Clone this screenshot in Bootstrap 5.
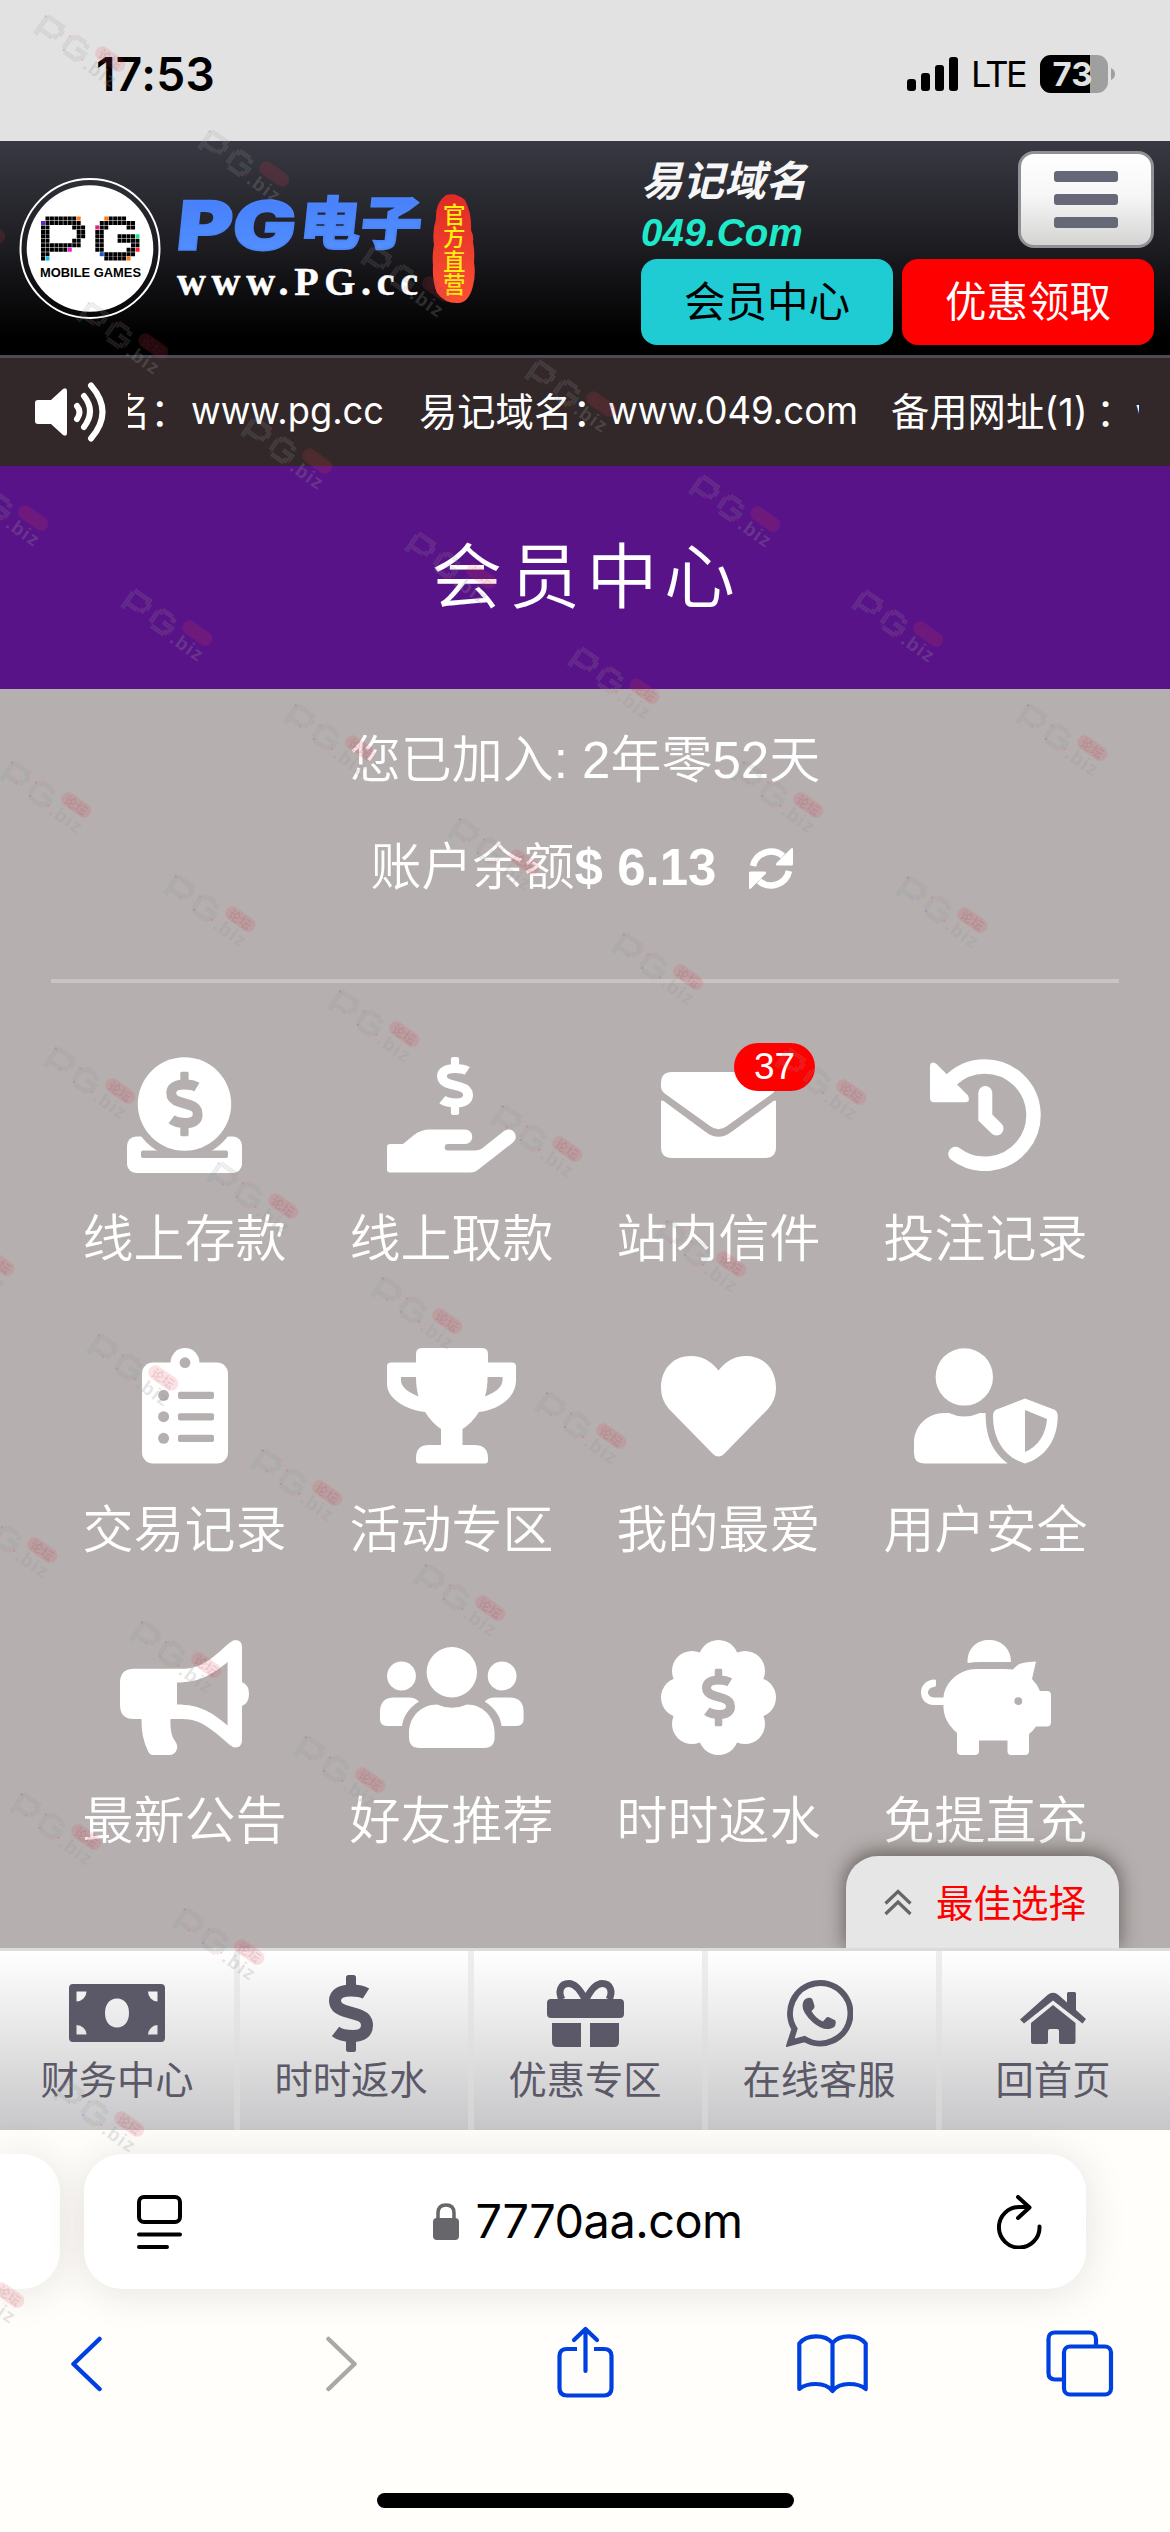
<!DOCTYPE html>
<html lang="zh-CN">
<head>
<meta charset="utf-8">
<meta name="viewport" content="width=device-width, initial-scale=1">
<title>会员中心</title>
<link href="https://cdn.jsdelivr.net/npm/bootstrap@5.3.0/dist/css/bootstrap.min.css" rel="stylesheet">
<style>
  body { width: 1170px; height: 2532px; overflow: hidden; background: #fffefb; font-family: "Liberation Sans", "Noto Sans CJK SC", sans-serif; line-height: 1; }
  a { text-decoration: none; color: inherit; }
  svg { display: block; flex: none; }
  .ui-font { font-family: Inter, "Noto Sans CJK SC", sans-serif; }

  .status { height: 141px; background: #e2e2e2; color: #000; padding: 7px 54px 0 96px; }
  .clock { font-size: 46px; font-weight: 600; letter-spacing: .4px; }
  .lte { font-size: 36px; letter-spacing: -2.6px; }

  .site-head { height: 217px; background: linear-gradient(#393943, #1c1c21 50%, #000 92%); border-bottom: 3px solid #4c4b55; padding: 10px 16px 0 16px; }
  .head-right { width: 513px; }
  .domain-cn { font-size: 41.5px; font-weight: 600; font-style: italic; color: #f6f6f6; height: 63px; padding-top: 10px; }
  .domain-en { font-size: 38.5px; font-weight: 700; font-style: italic; color: #1ee9cb; letter-spacing: .2px; }
  .menu-btn { width: 136px; height: 97px; border: 3px solid #909096; border-radius: 16px; background: linear-gradient(#fff, #f7f7f7 45%, #d4d4d3); padding: 0; }
  .menu-btn i { width: 64px; height: 11px; border-radius: 3px; background: #666878; }
  .head-btn { width: 252px; height: 86px; border: 0; border-radius: 16px; font-size: 41.5px; padding: 2px 0 0; line-height: 84px; }

  .ticker { height: 108px; background: #322829; color: #fff; padding: 0 31px 0 34px; }
  .ticker-text { width: 1011px; margin-left: 19px; font-size: 38.3px; height: 60px; }
  .ticker-text > span { flex: none; }

  .page-title { height: 223px; background: #591388; color: #fff; font-size: 71px; letter-spacing: 6.6px; font-weight: 350; padding-left: 3px; }

  .panel { height: 1259px; background: #b5afaf; color: #fff; }
  .joined { font-size: 51px; height: 106px; padding-top: 34px; }
  .joined, .balance { line-height: 1.5; font-weight: 350; }
  .balance { height: 146px; font-size: 51px; margin-bottom: 38px; padding-right: 6px; }
  .rule { height: 4px; margin: 0 51px; background: #c8c4c4; }
  .tiles { padding: 74px 51px 0; }
  .tile { height: 291px; }
  .tile .pic { height: 116px; }
  .tile .cap-text { font-size: 51px; line-height: 76px; margin-top: 29px; font-weight: 350; white-space: nowrap; }
  .mail-count { left: 149px; top: -14px; width: 81px; height: 48px; border-radius: 24px; background: #f00; font-size: 37px; line-height: 48px; }

  .best-pick { right: 51px; top: 1856px; width: 273px; height: 92px; background: #e6e6e6; border-radius: 32px 32px 0 0; color: #f00; font-size: 37.5px; box-shadow: 0 -3px 18px 2px rgba(70,65,60,.65); clip-path: inset(-40px -40px 0 -40px); padding-left: 38px; gap: 24px; }
  .best-pick span { padding-top: 5px; }

  .dock { height: 182px; border-top: 3px solid #dcdcdd; background: linear-gradient(#fff, #e4e4e5 50%, #c7c7c9); color: #5b5967; }
  .dock a { width: 234px; height: 179px; }
  .dock a + a { background: linear-gradient(#eeeeee, #d3d3d4) left / 6px 100% no-repeat; }
  .dock .glyph { height: 107px; }
  .dock .word { font-size: 38.3px; line-height: 46px; }

  .browser { height: 402px; background: #fffefb; }
  .url-row { padding-top: 24px; gap: 24px; height: 159px; }
  .prev-tab { width: 60px; height: 135px; background: #fff; border-radius: 0 38px 38px 0; box-shadow: 0 3px 40px rgba(60,40,30,.13); }
  .url-box { width: 1002px; height: 135px; background: #fff; border-radius: 38px; box-shadow: 0 3px 40px rgba(60,40,30,.13); padding: 0 44px 0 53px; color: #000; }
  .url-text { font-size: 46.8px; letter-spacing: -.5px; }
  .tools { padding: 36px 56px 0 71px; height: 204px; }
  .home-bar { width: 417px; height: 15px; border-radius: 8px; background: #000; }
  .stamps { left: 0; top: 0; pointer-events: none; z-index: 5; }
</style>
</head>
<body class="position-relative m-0">

<svg width="0" height="0" class="position-absolute" aria-hidden="true">
  <defs>
    <symbol id="dollar" viewBox="0 0 44 77" preserveAspectRatio="none">
      <rect x="17" y="0" width="10" height="16" rx="2.5" fill="currentColor"/><rect x="17" y="61" width="10" height="16" rx="2.5" fill="currentColor"/>
      <path d="M37 18.5C33 16 27 15.4 22 15.4C12 15.4 6 19 6 25.5C6 32 11 34.5 16 36L28 39.5C34 41.3 38 44 38 50.5C38 58 32 61 24 61C17 61 11 60 6.5 56.5" fill="none" stroke="currentColor" stroke-width="12" stroke-linejoin="round"/>
    </symbol>
    <g id="pg-cells" fill="none" stroke-width="4" stroke-dasharray="4 .46">
      <path stroke="currentColor" d="M4.46 2h31.2M4.46 6.46h35.6M0 10.9h8.9M31.2 10.9h13.2M0 15.4h8.9M35.7 15.4h8.9M0 19.8h8.9M35.7 19.8h8.9M0 24.3h8.9M31.2 24.3h8.9M0 28.8h40M0 33.2h26.7M0 37.7h8.9M0 42.1h4M67.7 2h17.8M58.8 6.46h35.6M58.8 10.9h8.9M85.6 10.9h8.9M54.3 15.4h8.9M54.3 19.8h8.9M76.6 19.8h17.8M54.3 24.3h8.9M76.6 24.3h22.3M54.3 28.8h8.9M90 28.8h8.9M54.3 33.2h8.9M85.6 33.2h8.9M63.3 37.7h31.2M63.3 42.1h22.3"/>
      <path stroke="#ff7a18" d="M35.7 2h4M63.3 2h4M85.6 42.1h4"/><path stroke="#6a1be0" d="M0 6.46h4"/><path stroke="#e81fd0" d="M26.8 33.2h4"/>
      <path stroke="#18bde0" d="M4.46 42.1h4"/><path stroke="#e0207c" d="M54.3 10.9h4"/><path stroke="#27e08a" d="M94.5 19.8h4"/>
      <path stroke="#ff2030" d="M94.5 33.2h4"/><path stroke="#1d55c8" d="M58.8 37.7h4"/>
    </g>
    <g id="stamp" transform="translate(-4 -1) rotate(35) scale(.96)">
      <use href="#pg-cells" transform="scale(.6 .57)" color="#999" opacity=".2"/>
      <rect x="64" y="-6" width="35" height="15" rx="7.5" fill="#e63c50" fill-opacity=".15"/>
      <text x="68.500" y="7" font-size="13" font-weight="700" fill="#803040" fill-opacity=".14" font-family="Noto Sans CJK SC">论坛</text>
      <text x="62" y="26" font-size="20" font-weight="700" fill="#999" fill-opacity=".25" textLength="37">.biz</text>
    </g>
    <linearGradient id="blue" x2="0" y2="1"><stop stop-color="#447bf9"/><stop offset="1" stop-color="#5593ff"/></linearGradient>
    <linearGradient id="seal" x2="0" y2="1"><stop stop-color="#e02a26"/><stop offset="1" stop-color="#fb5033"/></linearGradient>
  </defs>
</svg>

<div class="status ui-font d-flex align-items-center">
  <div class="clock">17:53</div>
  <div class="d-flex align-items-center ms-auto">
    <svg width="52" height="36" viewBox="0 0 52 36" style="margin-right:12px"><rect y="23" width="9" height="12" rx="3"/><rect x="14" y="17" width="9" height="18" rx="3"/><rect x="28" y="9" width="9" height="26" rx="3"/><rect x="42" y="1" width="9" height="34" rx="3"/></svg>
    <div class="lte">LTE</div>
    <svg width="76" height="38" viewBox="0 0 76 38" style="margin-left:15px"><clipPath id="bc"><rect width="68" height="38" rx="11"/></clipPath><g clip-path="url(#bc)"><rect width="68" height="38" fill="#9f9f9f"/><rect width="50" height="38"/></g><path d="M71 13q4 2 4 6t-4 6z" fill="#9f9f9f"/><text x="12.500" y="31" font-size="33" font-weight="700" fill="#e2e2e2" textLength="40">73</text></svg>
  </div>
</div>

<header class="site-head d-flex justify-content-between">
  <svg width="470" height="190" viewBox="16 151 470 190">
    <circle cx="90" cy="248.500" r="69.500" fill="none" stroke="#fff" stroke-width="2"/><circle cx="90" cy="248.500" r="63.300" fill="#fff"/>
    <use href="#pg-cells" x="41" y="216.500" color="#000"/>
    <text x="40" y="277" font-size="12.800" font-weight="700" textLength="101" lengthAdjust="spacingAndGlyphs">MOBILE GAMES</text>
    <g fill="url(#blue)">
      <text transform="translate(175 250) skewX(-6)" font-family="Inter" font-size="68" font-weight="900" stroke="#4b85fc" stroke-width="1.500" textLength="119" lengthAdjust="spacingAndGlyphs">PG</text>
      <text transform="translate(298 244) skewX(-6)" font-family="Noto Sans CJK SC" font-size="57" font-weight="900" stroke="#4b85fc" stroke-width="2" textLength="122" lengthAdjust="spacingAndGlyphs">电子</text>
    </g>
    <text x="177" y="295" font-family="Liberation Serif" font-size="40" font-weight="700" fill="#fff" stroke="#fff" stroke-width=".5" textLength="241">www.PG.cc</text>
    <path d="M446 195q10-3 19 5q7 14 6 30q3 6 2 12q2 10 1 20q2 12-1 24q-4 16-14 17q-14 1-22-10q-5-12-4-28q-1-10 1-20q-2-14 2-26q-1-16 10-24z" fill="url(#seal)"/>
    <g font-family="Noto Sans CJK SC" font-size="22.500" font-weight="500" fill="#ffee10"><text x="443" y="223">官</text><text x="443" y="246">方</text><text x="443" y="269.500">直</text><text x="443" y="292.500">营</text></g>
  </svg>
  <div class="head-right">
    <div class="d-flex justify-content-between" style="height:108px">
      <div><div class="domain-cn">易记域名</div><div class="domain-en">049.Com</div></div>
      <button class="menu-btn d-flex flex-column align-items-center justify-content-center" style="gap:12px"><i></i><i></i><i></i></button>
    </div>
    <div class="d-flex justify-content-between">
      <button class="head-btn" style="background:#1fccd4;color:#000">会员中心</button>
      <button class="head-btn" style="background:#f00;color:#fff">优惠领取</button>
    </div>
  </div>
</header>

<div class="ticker d-flex align-items-center">
  <svg width="75" height="62" viewBox="0 0 75 62"><path d="M4 19H17L29 8Q33 6 33 10V52Q33 56 29 54L17 43H4Q1 43 1 40V22Q1 19 4 19Z" fill="#fff"/><path d="M43 25Q48 31 43 38M50 15Q62 30 50 46M57 4.500Q80 31 57 57.500" fill="none" stroke="#fff" stroke-width="6" stroke-linecap="round"/></svg>
  <div class="ticker-text ui-font overflow-hidden d-flex align-items-center text-nowrap">
    <span style="margin-left:-16px;width:79px">名：</span><span style="width:228px"><svg width="193" height="60"><text x="0" y="42" fill="#fff" textLength="193" lengthAdjust="spacingAndGlyphs">www.pg.cc</text></svg></span><span style="width:189px">易记域名：</span><span style="width:283px"><svg width="250" height="60"><text x="0" y="42" fill="#fff" textLength="250" lengthAdjust="spacingAndGlyphs">www.049.com</text></svg></span><span style="width:199px">备用网址(1)</span><span style="margin-left:6px">：</span><span style="margin-left:1px">www.pg.cc</span>
  </div>
</div>

<h1 class="page-title m-0 d-flex align-items-center justify-content-center">会员中心</h1>

<main class="panel">
  <div class="joined text-center">您已加入: 2年零52天</div>
  <div class="balance d-flex align-items-center justify-content-center">
    <span>账户余额</span><b>$ 6.13</b>
    <svg width="44" height="43" viewBox="0 0 44 43" style="margin-left:33px"><g id="half"><path d="M4 19A18.500 18.500 0 0 1 34 9" fill="none" stroke="#fff" stroke-width="6.500"/><path d="M44 2V17Q44 18.500 42.500 18.500H28Q26 18 27.500 16L41.500 2Q43.500 0 44 2Z" fill="#fff"/></g><use href="#half" transform="rotate(180 22 21.500)"/></svg>
  </div>
  <div class="rule"></div>
  <div class="tiles row row-cols-4 g-0 text-center">
    <div class="tile col"><div class="pic d-flex justify-content-center align-items-center">
      <svg width="115" height="116" fill="#fff"><rect y="79.500" width="115" height="36.500" rx="9"/><circle cx="57.500" cy="47" r="54" fill="#b5afaf"/><rect x="14" y="93.500" width="87" height="7.500" rx="2" fill="#b5afaf"/><circle cx="57.500" cy="47" r="46.700"/><use href="#dollar" x="39.200" y="14.500" width="36.500" height="65" color="#b5afaf"/></svg></div>
      <div class="cap-text">线上存款</div></div>
    <div class="tile col"><div class="pic d-flex justify-content-center align-items-center">
      <svg width="129" height="116" fill="#fff"><use href="#dollar" x="50" y="0" width="36" height="58"/><path d="M3 87H16L27 78Q34 72.500 43 72.500H78a7.200 7.200 0 0 1 0 14.500H61a3.300 3.300 0 0 0 0 6.600H88q4 0 7-2L117 74a7.300 7.300 0 0 1 9 11.500L92 112Q88 115.500 83 115.500H3a3 3 0 0 1-3-3V90a3 3 0 0 1 3-3z"/></svg></div>
      <div class="cap-text">线上取款</div></div>
    <div class="tile col position-relative"><div class="pic d-flex justify-content-center align-items-center">
      <svg width="115" height="86" fill="#fff"><path d="M11 0H104Q115 0 115 11V15Q115 18.500 112 21L66 54Q57.500 60.500 49 54L3 21Q0 18.500 0 15V11Q0 0 11 0Z"/><path d="M0 29Q1.500 27.500 4 30L44 59.500Q57.500 70 71 59.500L111 30Q113.500 27.500 115 29V75Q115 86 104 86H11Q0 86 0 75Z"/></svg></div>
      <span class="mail-count position-absolute text-white">37</span>
      <div class="cap-text">站内信件</div></div>
    <div class="tile col"><div class="pic d-flex justify-content-center align-items-center">
      <svg width="111" height="112" fill="#fff"><g fill="none" stroke="#fff" stroke-width="14.500" stroke-linecap="round"><path d="M25.500 95A48.700 48.700 0 1 0 21 21"/><path d="M55.300 34V58.500L66.500 69.500" stroke-width="14"/></g><path d="M0 7.500Q0 3.500 3 3.500Q5 3.500 7 5.500L38 36.500Q41 43.300 35 43.300H4Q0 43.300 0 39Z"/></svg></div>
      <div class="cap-text">投注记录</div></div>

    <div class="tile col"><div class="pic d-flex justify-content-center align-items-center">
      <svg width="86" height="116" fill="#fff"><rect y="14.500" width="86" height="101" rx="11"/><circle cx="43" cy="14.400" r="14.400"/><g fill="#b5afaf"><circle cx="43" cy="14.700" r="5.400"/><circle cx="21.600" cy="47.300" r="5.500"/><circle cx="21.600" cy="68.700" r="5.500"/><circle cx="21.600" cy="90.300" r="5.500"/><rect x="36" y="43.800" width="36" height="7.200" rx="2"/><rect x="36" y="65.200" width="36" height="7.200" rx="2"/><rect x="36" y="86.700" width="36" height="7.200" rx="2"/></g></svg></div>
      <div class="cap-text">交易记录</div></div>
    <div class="tile col"><div class="pic d-flex justify-content-center align-items-center">
      <svg width="129" height="116" fill="#fff"><path fill-rule="evenodd" d="M35 0H95Q101 0 101 6V14.500H125Q129 14.500 129 18.500V32C129 52 108 62.500 92 64Q85 75 75.500 81V97H87Q101 97 101 110V112.500Q101 115.500 98 115.500H32Q29 115.500 29 112.500V110Q29 97 42 97H54V81Q45 75 38 64C22 62.500 0 52 0 36V18.500Q0 14.500 4 14.500H29V6Q29 0 35 0ZM14 29V33Q15 42 31.500 48.500Q29 40 29 29ZM115.500 29V33Q114.500 42 98 48.500Q100.600 40 100.600 29Z"/></svg></div>
      <div class="cap-text">活动专区</div></div>
    <div class="tile col"><div class="pic d-flex justify-content-center align-items-center">
      <svg width="115" height="101" fill="#fff"><path d="M57.500 14.500C66 4 75 0 85 0C103 0 115 13 115 32Q115 44 107 53L63 98Q57.500 103 52 98L8 53Q0 44 0 32C0 13 12 0 30 0C40 0 49 4 57.500 14.500Z"/></svg></div>
      <div class="cap-text">我的最爱</div></div>
    <div class="tile col"><div class="pic d-flex justify-content-center align-items-center">
      <svg width="144" height="116" fill="#fff"><circle cx="50.300" cy="28.900" r="28.700"/><path d="M0 95C0 78 13 65 31 65H35Q50 72 66 65H71.600C71.600 90 79 104 93.700 115.500H10Q0 115.500 0 105Z"/><path fill-rule="evenodd" d="M111 50.500L140 61.500Q143.700 63 143.700 68C143.700 93 130 110 111 115.500C92 110 79 93 79 68Q79 63 82.500 61.500ZM111 62L133 71Q131 95 111 104Z"/></svg></div>
      <div class="cap-text">用户安全</div></div>

    <div class="tile col"><div class="pic d-flex justify-content-center align-items-center">
      <svg width="129" height="115" fill="#fff"><path fill-rule="evenodd" d="M14 28.800H62C82 28.800 92 18 110 2.500Q113 0 115 0Q122 0 122 7V42Q129 45 129 54T122 66V100Q122 107.500 115 107.500Q113 107.500 110 105C92 90 82 79 62 79H50.500C50 90 52 97 55 101Q58 105 57 109Q55 115 49 115H33Q29.500 115 28 111Q21 97 21.500 79H14Q0 79 0 65V43Q0 28.800 14 28.800ZM57 42.500C80 42.500 93 34 107.600 22V85.500C93 73 80 64.500 57 64.500Z"/></svg></div>
      <div class="cap-text">最新公告</div></div>
    <div class="tile col"><div class="pic d-flex justify-content-center align-items-center">
      <svg width="144" height="101" fill="#fff"><circle cx="71.800" cy="25.200" r="25.200"/><path d="M29 86C29 70 41 57.500 57 57.500Q72 64 87 57.500C103 57.500 114.600 70 114.600 86V90Q114.600 101 104 101H39.500Q29 101 29 90Z"/><g id="side"><circle cx="21.500" cy="29" r="14.400"/><path d="M14 50.500H29Q35 50.500 39 54.500Q24 64 22 79H7Q0 79 0 72V65Q0 50.500 14 50.500Z"/></g><use href="#side" transform="translate(143.600) scale(-1 1)"/></svg></div>
      <div class="cap-text">好友推荐</div></div>
    <div class="tile col"><div class="pic d-flex justify-content-center align-items-center">
      <svg width="115" height="115" fill="#fff"><circle cx="57.500" cy="57.500" r="40"/><circle cx="57.500" cy="20" r="20"/><circle cx="57.500" cy="95" r="20"/><circle cx="20" cy="57.500" r="20"/><circle cx="95" cy="57.500" r="20"/><circle cx="31" cy="31" r="20"/><circle cx="84" cy="31" r="20"/><circle cx="31" cy="84" r="20"/><circle cx="84" cy="84" r="20"/><use href="#dollar" x="41" y="28.500" width="33" height="58" color="#b5afaf"/></svg></div>
      <div class="cap-text">时时返水</div></div>
    <div class="tile col"><div class="pic d-flex justify-content-center align-items-center">
      <svg width="130" height="115" fill="#fff"><path d="M46.600 23C46 8 56 0 68 0C80 0 90 8 90 22H60Q53 22 46.600 23Z"/><path fill-rule="evenodd" d="M56 29H84Q88 29 92 29.500C97 23 103 22 115 21.500L111 39Q116 44 119 51H126Q130 51 130 55V82Q130 86.500 126 86.500H115Q112 91 108 94V111Q108 115 104 115H90Q86.500 115 86.500 111V100.500H58V111Q58 115 54 115H40Q36 115 36 111V93C27 85 22 76 22.500 65H13C-4 65 -5 40 14 39.500Q15 39.500 15 41V45Q15 47 13 47C5 48 5 57 13 57.500H22.500C24 42 38 29 56 29ZM97.300 57.200A3.900 3.900 0 1 0 97.300 65A3.900 3.900 0 1 0 97.300 57.200Z"/></svg></div>
      <div class="cap-text">免提直充</div></div>
  </div>
</main>

<a href="#" class="best-pick position-absolute d-flex align-items-center">
  <svg width="28" height="27" viewBox="0 0 28 27" fill="none" stroke="#666" stroke-width="3.200"><path d="M1.500 14.500L14 2.500L26.500 14.500M1.500 25L14 13L26.500 25"/></svg><span>最佳选择</span>
</a>

<nav class="dock d-flex text-center">
  <a href="#"><div class="glyph d-flex justify-content-center" style="padding-top:33px"><svg width="96" height="58" viewBox="0 0 96 58"><path fill="currentColor" fill-rule="evenodd" d="M4 0H92Q96 0 96 4V54Q96 58 92 58H4Q0 58 0 54V4Q0 0 4 0ZM7.500 7.500V17.500A10 10 0 0 0 17.500 7.500ZM88.500 7.500H79A10 10 0 0 0 88.500 17.500ZM7.500 50.500H17.500A10 10 0 0 0 7.500 41ZM88.500 50.500V41A10 10 0 0 0 79 50.500ZM48 14.500C40 14.500 36 21 36 29S40 43.500 48 43.500S60 37 60 29S56 14.500 48 14.500Z"/></svg></div><div class="word">财务中心</div></a>
  <a href="#"><div class="glyph d-flex justify-content-center pt-4"><svg width="44" height="77"><use href="#dollar" width="44" height="77"/></svg></div><div class="word">时时返水</div></a>
  <a href="#"><div class="glyph d-flex justify-content-center" style="padding-top:29px"><svg width="77" height="67" viewBox="0 0 77 67"><path d="M4 19H73Q77 19 77 23V34Q77 38 73 38H4Q0 38 0 34V23Q0 19 4 19ZM5 43H34V67H10Q5 67 5 62ZM43 43H72V62Q72 67 67 67H43Z" fill="currentColor"/><path d="M38.500 20Q30 3.500 22 3.500C13 3.500 11 12 15 19.500M38.500 20Q47 3.500 55 3.500C64 3.500 66 12 62 19.500" fill="none" stroke="currentColor" stroke-width="7"/></svg></div><div class="word">优惠专区</div></a>
  <a href="#"><div class="glyph d-flex justify-content-center" style="padding-top:29px"><svg width="67" height="67" viewBox="0 0 67 67"><path d="M4 63L8.500 49A30.200 30.200 0 1 1 18.500 59Z" fill="none" stroke="currentColor" stroke-width="6"/><path d="M22 18Q26 17 27 21L28.500 26Q29 28 25.500 31Q29 38 37 41.500L40.500 37.500Q41.500 36.500 43 37.200L49.500 40.500Q51 47 45 48.500Q37 51 27 42.500Q16 32.500 16.500 25Q17 19 22 18Z" fill="currentColor"/></svg></div><div class="word">在线客服</div></a>
  <a href="#"><div class="glyph d-flex justify-content-center" style="padding-top:41px"><svg width="66" height="52" viewBox="0 0 66 52" fill="currentColor"><path d="M0 27.500L27.500 3Q33 -1.500 38.500 3L47 10.500V1.500Q47 0 48.500 0H54.500Q56 0 56 1.500V18L66 27L62.500 31.500L33 8.500L4 31.500Z"/><path d="M33 13L55.500 31V50Q55.500 52 53.500 52H41Q39 52 39 50V39Q39 37 37 37H30Q28 37 28 39V50Q28 52 26 52H13Q11 52 11 50V31Z"/></svg></div><div class="word">回首页</div></a>
</nav>

<footer class="browser ui-font">
  <div class="url-row d-flex">
    <div class="prev-tab"></div>
    <div class="url-box d-flex align-items-center justify-content-between">
      <svg width="45" height="54" viewBox="0 0 45 54" fill="none" stroke="#000" stroke-width="4" stroke-linecap="round"><rect x="2" y="2" width="41" height="25" rx="5"/><path d="M2 39.500H43M2 52H30"/></svg>
      <div class="d-flex align-items-center" style="gap:17px;margin-right:4px">
        <svg width="26" height="37" viewBox="0 0 26 37"><rect y="15" width="26" height="22" rx="4" fill="#67666b"/><path d="M5 17V10Q5 2 13 2T21 10V17" fill="none" stroke="#67666b" stroke-width="3.500"/></svg>
        <span class="url-text">7770aa.com</span>
      </div>
      <svg width="45" height="54" viewBox="0 0 45 54" fill="none" stroke="#000" stroke-width="4" stroke-linecap="round" stroke-linejoin="round"><path d="M42.500 31.500A20.300 20.300 0 1 1 22.500 12H32M21 2L32.500 12.500L21 23"/></svg>
    </div>
  </div>
  <div class="tools d-flex align-items-start">
    <svg width="32" height="56" style="margin-top:11px" fill="none" stroke="#0040e0" stroke-width="4.500" stroke-linecap="round" stroke-linejoin="round"><path d="M28.500 3L2.500 28L28.500 53"/></svg>
    <svg width="32" height="56" style="margin-top:11px;margin-left:223px" fill="none" stroke="#a9a9a7" stroke-width="4.500" stroke-linecap="round" stroke-linejoin="round"><path d="M2.500 3L28.500 28L2.500 53"/></svg>
    <svg width="57" height="72" style="margin-top:1px;margin-left:199px" fill="none" stroke="#0040e0" stroke-width="4.200" stroke-linecap="round" stroke-linejoin="round"><path d="M20 23H10Q2.500 23 2.500 30V62Q2.500 69.500 10 69.500H47Q54.500 69.500 54.500 62V30Q54.500 23 47 23H37" stroke-linecap="butt"/><path d="M28.500 45V3M17 14L28.500 3L40 14"/></svg>
    <svg width="71" height="60" style="margin-top:9px;margin-left:183px" fill="none" stroke="#0040e0" stroke-width="4.200" stroke-linejoin="round"><path d="M35.500 9Q30 2.300 19 2.300Q8 2.300 2.300 9.500V55Q8 50 19 50Q30 50 35.500 57Q41 50 52 50Q63 50 68.700 55V9.500Q63 2.300 52 2.300Q41 2.300 35.500 9ZV57"/></svg>
    <svg width="68" height="67" style="margin-top:5px;margin-left:178px" fill="none" stroke="#0040e0" stroke-width="4.200"><rect x="18" y="16.500" width="47" height="48" rx="6"/><path d="M50 15V9Q50 2.500 43.500 2.500H9Q2.500 2.500 2.500 9V43Q2.500 49.500 9 49.500H17"/></svg>
  </div>
  <div class="home-bar mx-auto"></div>
</footer>

<svg class="stamps position-absolute" width="1170" height="2532" aria-hidden="true">
  <use href="#stamp" x="51" y="14"/><use href="#stamp" x="215" y="129"/><use href="#stamp" x="378" y="244"/><use href="#stamp" x="542" y="359"/><use href="#stamp" x="706" y="474"/><use href="#stamp" x="869" y="589"/><use href="#stamp" x="1033" y="703"/>
  <use href="#stamp" x="-69" y="186"/><use href="#stamp" x="94" y="301"/><use href="#stamp" x="258" y="416"/><use href="#stamp" x="422" y="531"/><use href="#stamp" x="585" y="646"/><use href="#stamp" x="749" y="760"/><use href="#stamp" x="913" y="875"/>
  <use href="#stamp" x="-26" y="473"/><use href="#stamp" x="138" y="588"/><use href="#stamp" x="301" y="703"/><use href="#stamp" x="465" y="817"/><use href="#stamp" x="629" y="932"/><use href="#stamp" x="792" y="1047"/>
  <use href="#stamp" x="17" y="760"/><use href="#stamp" x="181" y="874"/><use href="#stamp" x="345" y="989"/><use href="#stamp" x="508" y="1104"/><use href="#stamp" x="672" y="1219"/>
  <use href="#stamp" x="61" y="1046"/><use href="#stamp" x="224" y="1161"/><use href="#stamp" x="388" y="1276"/><use href="#stamp" x="552" y="1391"/>
  <use href="#stamp" x="-60" y="1218"/><use href="#stamp" x="104" y="1333"/><use href="#stamp" x="268" y="1448"/><use href="#stamp" x="431" y="1563"/>
  <use href="#stamp" x="-17" y="1505"/><use href="#stamp" x="147" y="1620"/><use href="#stamp" x="311" y="1735"/>
  <use href="#stamp" x="27" y="1792"/><use href="#stamp" x="190" y="1907"/><use href="#stamp" x="70" y="2079"/><use href="#stamp" x="-50" y="2250"/>
</svg>
<script src="https://cdn.jsdelivr.net/npm/bootstrap@5.3.0/dist/js/bootstrap.bundle.min.js"></script>
</body>
</html>
